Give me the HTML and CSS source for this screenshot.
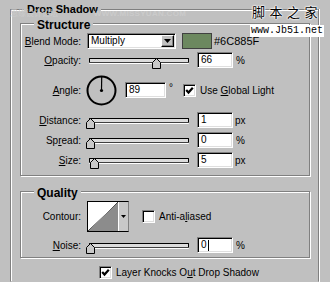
FILE: index.html
```html
<!DOCTYPE html>
<html lang="en">

<head>
    <meta charset="UTF-8">
    <meta name="viewport" content="width=device-width, initial-scale=1.0">
    <title>Layer Style - Drop Shadow</title>
    <link rel="stylesheet" href="styles.css">
</head>

<body>
    <div class="dialog">
        <div class="group outer">
            <span class="group-title title-main">Drop Shadow</span>

            <!-- Structure -->
            <div class="group structure">
                <span class="group-title">Structure</span>

                <div class="row">
                    <span class="label"><u>B</u>lend Mode:</span>
                    <div class="controls">
                        <div class="select">
                            <span class="select-text">Multiply</span>
                            <span class="drop-btn">
                                <svg width="7" height="4" viewBox="0 0 7 4"><polygon points="0,0 7,0 3.5,4" fill="#000"/></svg>
                            </span>
                        </div>
                        <span class="swatch"></span>
                        <span class="hex">#6C885F</span>
                    </div>
                </div>

                <div class="row r-opacity">
                    <span class="label"><u>O</u>pacity:</span>
                    <div class="controls">
                        <div class="slider">
                            <svg class="thumb" style="left: 62px" width="9" height="11" viewBox="0 0 9 11"><polygon points="4.5,0.5 8.5,4.5 8.5,10.5 0.5,10.5 0.5,4.5" fill="#c8c8c8" stroke="#000"/></svg>
                        </div>
                        <span class="field">66</span>
                        <span class="unit">%</span>
                    </div>
                </div>

                <div class="row r-angle">
                    <span class="label"><u>A</u>ngle:</span>
                    <div class="controls">
                        <svg class="dial" width="31" height="31" viewBox="0 0 31 31">
                            <circle cx="15.5" cy="15.5" r="14" fill="none" stroke="#000" stroke-width="2"/>
                            <line x1="15.5" y1="15.5" x2="15.7" y2="2" stroke="#000" stroke-width="1.2"/>
                            <circle cx="15.5" cy="15.5" r="1.6" fill="#000"/>
                        </svg>
                        <span class="field field-wide">89</span>
                        <span class="degree">°</span>
                        <span class="check checked">
                            <svg width="11" height="11" viewBox="0 0 11 11"><polyline points="2.2,5 4.5,7.5 8.8,2.8" fill="none" stroke="#000" stroke-width="2.2"/></svg>
                        </span>
                        <span class="check-label">Use <u>G</u>lobal Light</span>
                    </div>
                </div>

                <div class="row r-distance">
                    <span class="label"><u>D</u>istance:</span>
                    <div class="controls">
                        <div class="slider">
                            <svg class="thumb" style="left: -4px" width="9" height="11" viewBox="0 0 9 11"><polygon points="4.5,0.5 8.5,4.5 8.5,10.5 0.5,10.5 0.5,4.5" fill="#c8c8c8" stroke="#000"/></svg>
                        </div>
                        <span class="field">1</span>
                        <span class="unit unit-px">px</span>
                    </div>
                </div>

                <div class="row r-small">
                    <span class="label">Sp<u>r</u>ead:</span>
                    <div class="controls">
                        <div class="slider">
                            <svg class="thumb" style="left: -4px" width="9" height="11" viewBox="0 0 9 11"><polygon points="4.5,0.5 8.5,4.5 8.5,10.5 0.5,10.5 0.5,4.5" fill="#c8c8c8" stroke="#000"/></svg>
                        </div>
                        <span class="field">0</span>
                        <span class="unit">%</span>
                    </div>
                </div>

                <div class="row r-small">
                    <span class="label"><u>S</u>ize:</span>
                    <div class="controls">
                        <div class="slider">
                            <svg class="thumb" style="left: 0px" width="9" height="11" viewBox="0 0 9 11"><polygon points="4.5,0.5 8.5,4.5 8.5,10.5 0.5,10.5 0.5,4.5" fill="#c8c8c8" stroke="#000"/></svg>
                        </div>
                        <span class="field">5</span>
                        <span class="unit unit-px">px</span>
                    </div>
                </div>
            </div>

            <!-- Quality -->
            <div class="group quality">
                <span class="group-title">Quality</span>

                <div class="row r-contour">
                    <span class="label">Contour:</span>
                    <div class="controls">
                        <div class="contour">
                            <span class="contour-curve"></span>
                            <span class="contour-arrow">
                                <svg width="5" height="3" viewBox="0 0 5 3"><polygon points="0,0 5,0 2.5,3" fill="#000"/></svg>
                            </span>
                        </div>
                        <span class="check check-aa"></span>
                        <span class="check-label">Anti-a<u>l</u>iased</span>
                    </div>
                </div>

                <div class="row r-noise">
                    <span class="label"><u>N</u>oise:</span>
                    <div class="controls">
                        <div class="slider">
                            <svg class="thumb" style="left: -4px" width="9" height="11" viewBox="0 0 9 11"><polygon points="4.5,0.5 8.5,4.5 8.5,10.5 0.5,10.5 0.5,4.5" fill="#c8c8c8" stroke="#000"/></svg>
                        </div>
                        <span class="field">0<span class="caret"></span></span>
                        <span class="unit">%</span>
                    </div>
                </div>
            </div>

            <div class="knock-row">
                <span class="check checked">
                    <svg width="11" height="11" viewBox="0 0 11 11"><polyline points="2.2,5 4.5,7.5 8.8,2.8" fill="none" stroke="#000" stroke-width="2.2"/></svg>
                </span>
                <span class="check-label">Layer Knocks O<u>u</u>t Drop Shadow</span>
            </div>
        </div>
    </div>

    <!-- watermarks laid over the picture -->
    <div class="wm-faint">
        <span>思缘设计论坛</span>
        <span class="wm-faint-url">WWW.MISSYUAN.COM</span>
    </div>
    <div class="wm-cn">脚本之家</div>
    <div class="wm-url">www.Jb51.net</div>
</body>

</html>
```

FILE: styles.css
```css
/* Photoshop layer style panel */
html,
body {
    margin: 0;
    padding: 0;
    background-color: #c0c0c0;
}

body {
    position: relative;
    width: 330px;
    height: 282px;
    overflow: hidden;
    font-family: 'Liberation Sans', Arial, sans-serif;
    font-size: 10px;
    color: #000;
}

u {
    text-decoration-thickness: 1px;
    text-underline-offset: 1px;
}

.dialog {
    padding: 9px 0 0 10px;
}

/* etched group boxes */
.group {
    position: relative;
    box-sizing: border-box;
    border: 1px solid #808080;
    box-shadow: inset 1px 1px 0 #fff, 1px 1px 0 #fff;
}

.group-title {
    position: absolute;
    top: -6px;
    left: 13px;
    padding: 0 3px;
    background-color: #c0c0c0;
    font-size: 12px;
    font-weight: bold;
    line-height: 14px;
}

.title-main {
    top: -7px;
    left: 13px;
    font-size: 11px;
    line-height: 13px;
}

.outer {
    width: 309px;
    height: 273px;
    padding: 13px 0 0 9px;
    border-bottom-color: transparent;
    box-shadow: inset 1px 1px 0 #fff, 1px 0 0 #fff;
}

.structure {
    width: 290px;
    height: 153px;
    padding-top: 9px;
}

.quality {
    width: 290px;
    height: 67px;
    margin-top: 15px;
    padding-top: 9px;
}

/* rows */
.row {
    display: grid;
    grid-template-columns: 60px auto;
    column-gap: 6px;
    align-items: center;
    height: 16px;
}

.r-opacity {
    margin-top: 3px;
}

.r-angle {
    margin-top: 6px;
    height: 32px;
}

.r-distance {
    margin-top: 6px;
}

.r-small {
    margin-top: 4px;
}

.r-contour {
    height: 31px;
}

.r-noise {
    margin-top: 5px;
}

.label {
    text-align: right;
    white-space: nowrap;
}

.controls {
    display: flex;
    align-items: center;
    white-space: nowrap;
}

/* sunken controls */
.select,
.field {
    box-sizing: border-box;
    height: 16px;
    border: 1px solid;
    border-color: #808080 #fff #fff #808080;
    box-shadow: inset 1px 1px 0 #000, inset -1px -1px 0 #dfdfdf;
    background-color: #fff;
}

.select {
    display: flex;
    align-items: center;
    justify-content: space-between;
    width: 89px;
    padding: 1px 1px 1px 3px;
}

.select-text {
    line-height: 12px;
}

.drop-btn {
    box-sizing: border-box;
    display: flex;
    align-items: center;
    justify-content: center;
    width: 13px;
    height: 12px;
    background-color: #c0c0c0;
    border: 1px solid;
    border-color: #fff #000 #000 #fff;
    box-shadow: inset -1px -1px 0 #808080;
}

.swatch {
    box-sizing: border-box;
    width: 30px;
    height: 16px;
    margin-left: 6px;
    border: 1px solid #404040;
    background-color: #6c885f;
}

.hex {
    margin-left: 2px;
    font-size: 11px;
}

.field {
    display: flex;
    align-items: center;
    width: 36px;
    padding-left: 3px;
    line-height: 12px;
}

.field-wide {
    width: 41px;
}

.caret {
    display: inline-block;
    width: 1px;
    height: 11px;
    margin-left: 1px;
    background-color: #000;
}

.unit {
    margin-left: 3px;
}

.unit-px {
    margin-left: 2px;
}

/* sliders */
.slider {
    position: relative;
    box-sizing: border-box;
    width: 100px;
    height: 5px;
    margin: 0 8px 0 2px;
    border: 1px solid #000;
    border-bottom-color: #404040;
    border-radius: 1px;
    background-color: #dcdcdc;
    box-shadow: 0 1px 0 #fff;
}

.thumb {
    position: absolute;
    top: -1px;
    display: block;
}

/* angle */
.dial {
    display: block;
    margin-left: -1px;
}

.r-angle .field {
    margin-left: 8px;
}

.degree {
    align-self: flex-start;
    margin: 7px 0 0 3px;
    font-size: 10px;
}

/* checkboxes */
.check {
    box-sizing: border-box;
    display: block;
    width: 13px;
    height: 13px;
    border: 1px solid;
    border-color: #808080 #fff #fff #808080;
    box-shadow: inset 1px 1px 0 #000, inset -1px -1px 0 #dfdfdf;
    background-color: #fff;
}

.check svg {
    display: block;
}

.r-angle .check {
    margin-left: 10px;
}

.check-label {
    margin-left: 4px;
}

.check-aa {
    margin-left: 13px;
}

/* contour picker */
.contour {
    box-sizing: border-box;
    display: flex;
    width: 42px;
    height: 31px;
    border: 1px solid #000;
    border-right-color: #808080;
}

.contour-curve {
    width: 30px;
    background: linear-gradient(to bottom right, #fff 49%, #404040 50%, #8c8c8c 51%);
}

.contour-arrow {
    display: flex;
    align-items: center;
    justify-content: center;
    flex: 1;
    border-left: 1px solid #fff;
    background-color: #c8c8c8;
}

.knock-row {
    display: flex;
    align-items: center;
    margin-top: 8px;
    padding-left: 79px;
}

/* watermarks */
.wm-faint {
    position: absolute;
    top: 8px;
    left: 10px;
    font-family: 'Noto Sans CJK SC', sans-serif;
    font-size: 8px;
    line-height: 10px;
    color: #cbcbcb;
}

.wm-faint-url {
    margin-left: 34px;
    font-family: 'Liberation Sans', Arial, sans-serif;
    font-weight: bold;
    letter-spacing: 0.3px;
}

.wm-cn {
    position: absolute;
    top: 3px;
    left: 252px;
    font-family: 'Noto Sans CJK SC', sans-serif;
    font-size: 13px;
    line-height: 17px;
    letter-spacing: 4.5px;
    text-shadow: 0 0 2px #fff, 0 0 2px #fff, 0 0 2px #fff, 0 0 1px #fff;
}

.wm-url {
    position: absolute;
    top: 25px;
    left: 250px;
    padding: 0 1px;
    background-color: #fff;
    font-family: 'Liberation Mono', monospace;
    font-size: 10px;
    line-height: 12px;
}
```
